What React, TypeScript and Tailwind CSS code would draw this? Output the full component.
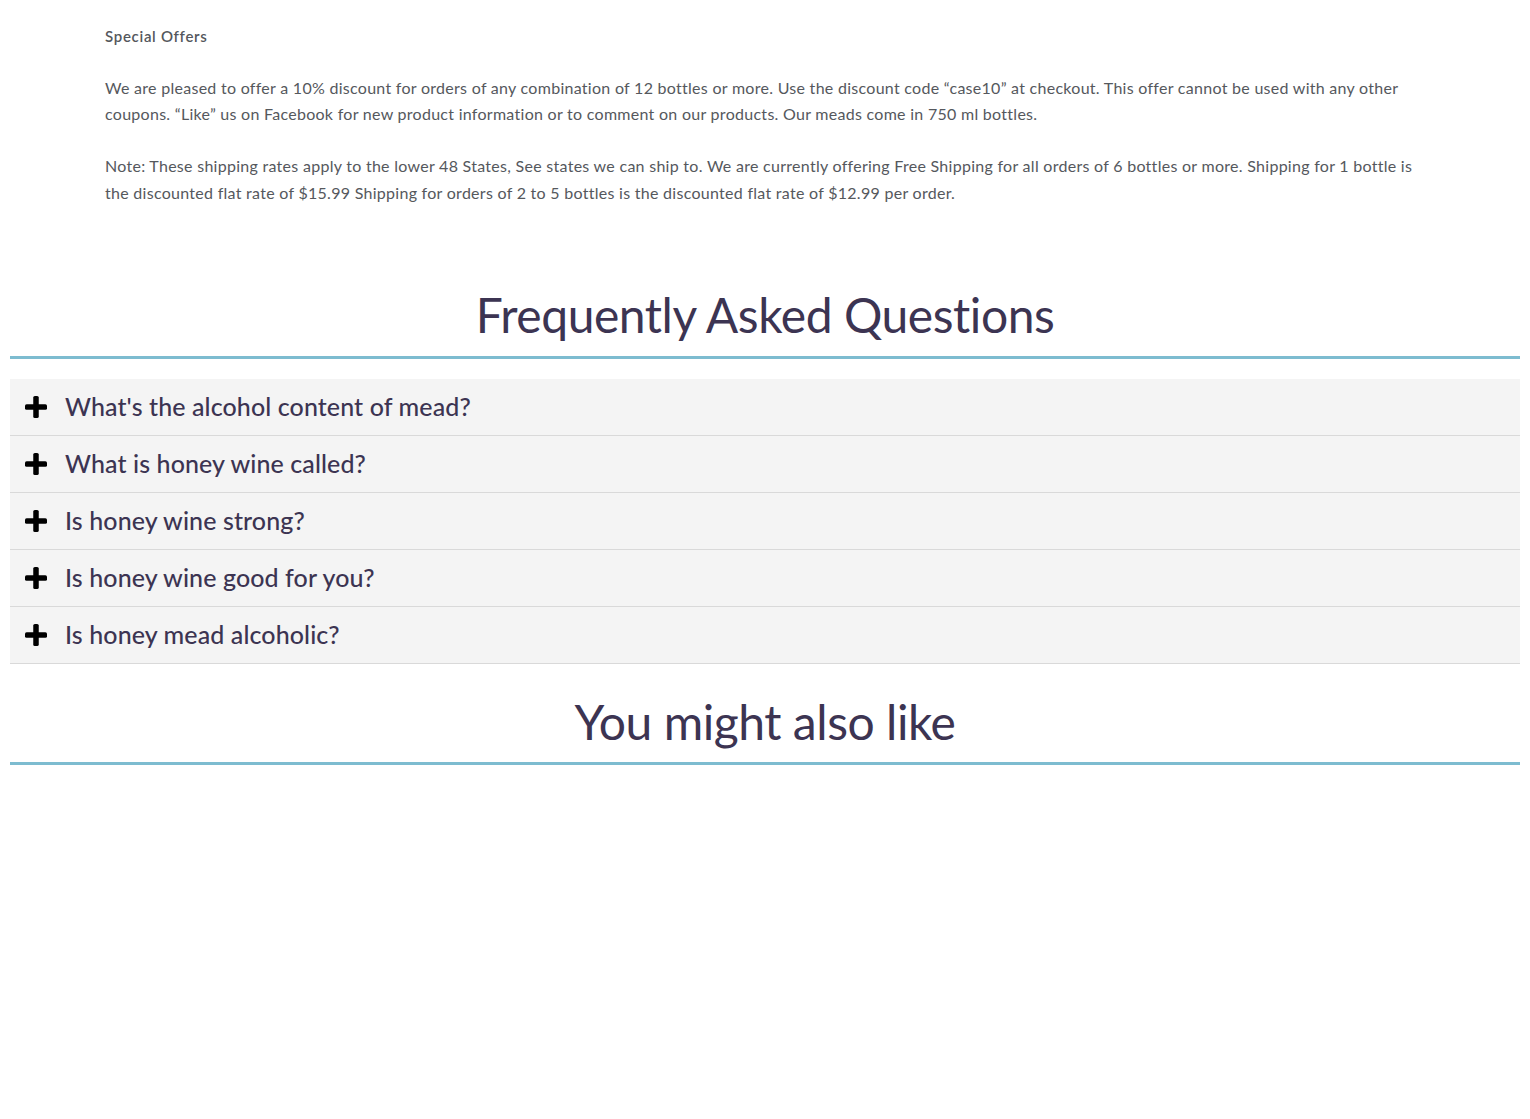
import React from "react";

const questions = [
  "What's the alcohol content of mead?",
  "What is honey wine called?",
  "Is honey wine strong?",
  "Is honey wine good for you?",
  "Is honey mead alcoholic?",
];

function PlusIcon() {
  return (
    <svg width="22" height="22" viewBox="0 0 22 22" className="shrink-0" aria-hidden="true">
      <rect x="0" y="8.25" width="22" height="5.5" rx="1.6" fill="#000" />
      <rect x="8.25" y="0" width="5.5" height="22" rx="1.6" fill="#000" />
    </svg>
  );
}

function SectionHeading({ children }: { children: React.ReactNode }) {
  return (
    <div>
      <h2 className="text-center font-['Lato',sans-serif] text-[48px] leading-[57.6px] font-normal tracking-[-0.45px] text-[#3c3452]">
        {children}
      </h2>
      <div className="mt-[12px] h-[3px] bg-[#7dbcd0]" />
    </div>
  );
}

export default function App() {
  return (
    <div className="min-h-[1119px] bg-white px-[10px] font-['Lato',sans-serif]">
      <div className="ml-[95px] w-[1330px] pt-[23px] text-[#55585d]">
        <p className="text-[15px] leading-[26px] font-semibold tracking-[0.7px] text-[#54575c]">Special Offers</p>
        <p className="mt-[26px] text-[16px] leading-[26px] tracking-[0.28px]">
          We are pleased to offer a 10% discount for orders of any combination of 12 bottles or more. Use the discount code “case10” at checkout. This offer cannot be used with any other coupons. “Like” us on Facebook for new product information or to comment on our products. Our meads come in 750 ml bottles.
        </p>
        <p className="mt-[26px] text-[16px] leading-[26.5px] tracking-[0.28px]">
          Note: These shipping rates apply to the lower 48 States, See states we can ship to. We are currently offering Free Shipping for all orders of 6 bottles or more. Shipping for 1 bottle is the discounted flat rate of $15.99 Shipping for orders of 2 to 5 bottles is the discounted flat rate of $12.99 per order.
        </p>
      </div>

      <div className="mt-[80px]">
        <SectionHeading>Frequently Asked Questions</SectionHeading>
      </div>

      <div className="mt-[20px]">
        {questions.map((q) => (
          <div
            key={q}
            className="flex h-[57px] items-center gap-[18px] border-b border-[#d9d9d9] bg-[#f4f4f4] pl-[15px]"
          >
            <PlusIcon />
            <span className="text-[25px] leading-none font-medium tracking-[0.1px] text-[#3c3452]">{q}</span>
          </div>
        ))}
      </div>

      <div className="mt-[29px]">
        <SectionHeading>You might also like</SectionHeading>
      </div>
    </div>
  );
}
